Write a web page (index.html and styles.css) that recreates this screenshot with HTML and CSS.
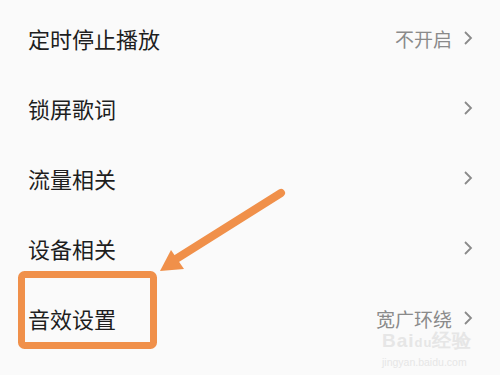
FILE: index.html
```html
<!DOCTYPE html>
<html>
<head>
<meta charset="utf-8">
<link rel="stylesheet" href="styles.css">
</head>
<body>
<div class="page">
  <ul class="list">
    <li class="row"><span class="label">定时停止播放</span><span class="right"><span class="value">不开启</span><svg class="chev" viewBox="0 0 10 16"><path d="M2 2 L8 8 L2 14"/></svg></span></li>
    <li class="row"><span class="label">锁屏歌词</span><span class="right"><svg class="chev" viewBox="0 0 10 16"><path d="M2 2 L8 8 L2 14"/></svg></span></li>
    <li class="row"><span class="label">流量相关</span><span class="right"><svg class="chev" viewBox="0 0 10 16"><path d="M2 2 L8 8 L2 14"/></svg></span></li>
    <li class="row"><span class="label">设备相关</span><span class="right"><svg class="chev" viewBox="0 0 10 16"><path d="M2 2 L8 8 L2 14"/></svg></span></li>
    <li class="row"><span class="label">音效设置</span><span class="right"><span class="value">宽广环绕</span><svg class="chev" viewBox="0 0 10 16"><path d="M2 2 L8 8 L2 14"/></svg></span></li>
  </ul>
  <svg class="annot" viewBox="0 0 500 375" width="500" height="375">
    <rect x="21.5" y="274.5" width="132" height="71" rx="3" fill="none" stroke="#f0904a" stroke-width="7"/>
    <line x1="281" y1="193" x2="176" y2="259" stroke="#f0904a" stroke-width="8" stroke-linecap="round"/>
    <polygon points="160,271 171,250 184,269" fill="#f0904a"/>
  </svg>
  <div class="wm">
    <div class="wm-top">Bai<span class="wm-du">du</span>经验</div>
    <div class="wm-url">jingyan.baidu.com</div>
  </div>
</div>
</body>
</html>
```

FILE: styles.css
```css
html, body {
  margin: 0;
  padding: 0;
  background: #fafafa;
}
.page {
  position: relative;
  width: 500px;
  height: 375px;
  overflow: hidden;
  font-family: "Noto Sans CJK SC", "Noto Sans", sans-serif;
}
.list {
  list-style: none;
  margin: 0;
  padding: 3px 27px 0 28px;
}
.row {
  height: 70px;
  display: flex;
  align-items: center;
  justify-content: space-between;
}
.label {
  font-size: 22px;
  color: #1e1e1e;
  line-height: 1;
}
.right {
  display: flex;
  align-items: center;
  gap: 11px;
}
.value {
  font-size: 19px;
  color: #8a8a8a;
  line-height: 1;
}
.chev {
  width: 10px;
  height: 16px;
  fill: none;
  stroke: #8a8a8a;
  stroke-width: 1.8;
}
.annot {
  position: absolute;
  left: 0;
  top: 0;
}
.wm {
  position: absolute;
  left: 382px;
  top: 333px;
  color: #e6e6e6;
  font-family: "Liberation Sans", sans-serif;
}
.wm-top {
  font-size: 19px;
  font-weight: bold;
  line-height: 16px;
  letter-spacing: 1px;
}
.wm-du {
  font-size: 13px;
}
.wm-url {
  font-size: 10.5px;
  line-height: 12px;
  margin-top: 5px;
}
```
